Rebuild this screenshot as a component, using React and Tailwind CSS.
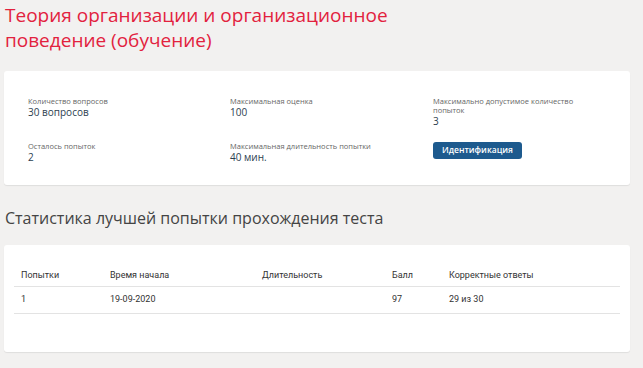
export default function App() {
  const items = [
    { label: "Количество вопросов", value: "30 вопросов" },
    { label: "Максимальная оценка", value: "100" },
    { label: "Максимально допустимое количество попыток", value: "3" },
    { label: "Осталось попыток", value: "2" },
    { label: "Максимальная длительность попытки", value: "40 мин." },
  ];
  return (
    <div className="min-h-[368px] bg-[#f2f1f0] px-[4px] pt-[3px] pb-4 text-[#333]" style={{ fontFamily: '"Open Sans", sans-serif' }}>
      <h1 className="pl-[1px] text-[19px] leading-[25px] font-medium text-[#e2223e] w-[420px]">
        Теория организации и организационное поведение (обучение)
      </h1>

      {/* Info card */}
      <div className="mt-[18px] w-[626px] h-[114px] rounded-[3px] bg-white shadow-[0_1px_1px_rgba(0,0,0,0.08)] pl-[24px] pt-[26px]">
        <div className="grid grid-cols-[202px_203px_150px] gap-y-[16px]">
          {items.map((it) => (
            <div key={it.label}>
              <div className="text-[7.5px] leading-[9px] text-[#666] w-[145px]">{it.label}</div>
              <div className="mt-[1px] text-[10px] leading-[10px] font-medium text-[#2c3e50]">{it.value}</div>
            </div>
          ))}
          <div>
            <button className="block h-[17px] w-[89px] rounded-[3px] bg-[#1d5a8e] text-[8.5px] font-semibold text-white">
              Идентификация
            </button>
          </div>
        </div>
      </div>

      <h2 className="mt-[22px] pl-[1px] text-[16px] leading-[22px] text-[#444]">
        Статистика лучшей попытки прохождения теста
      </h2>

      {/* Stats card */}
      <div className="mt-[16px] w-[626px] h-[107px] rounded-[3px] bg-white shadow-[0_1px_1px_rgba(0,0,0,0.08)] px-[10px] pt-[20px]" style={{ fontFamily: '"Roboto", sans-serif' }}>
        <table className="w-[606px] text-[9px] text-[#333] border-collapse">
          <thead>
            <tr className="border-b border-[#e3e3e3]">
              <th className="h-[21px] w-[96px] pl-[7px] text-left font-normal align-middle">Попытки</th>
              <th className="w-[152px] text-left font-normal">Время начала</th>
              <th className="w-[130px] text-left font-normal">Длительность</th>
              <th className="w-[57px] text-left font-normal">Балл</th>
              <th className="text-left font-normal">Корректные ответы</th>
            </tr>
          </thead>
          <tbody>
            <tr className="border-b border-[#e3e3e3]">
              <td className="h-[27px] pl-[7px]">1</td>
              <td>19-09-2020</td>
              <td></td>
              <td>97</td>
              <td>29 из 30</td>
            </tr>
          </tbody>
        </table>
      </div>
    </div>
  );
}
